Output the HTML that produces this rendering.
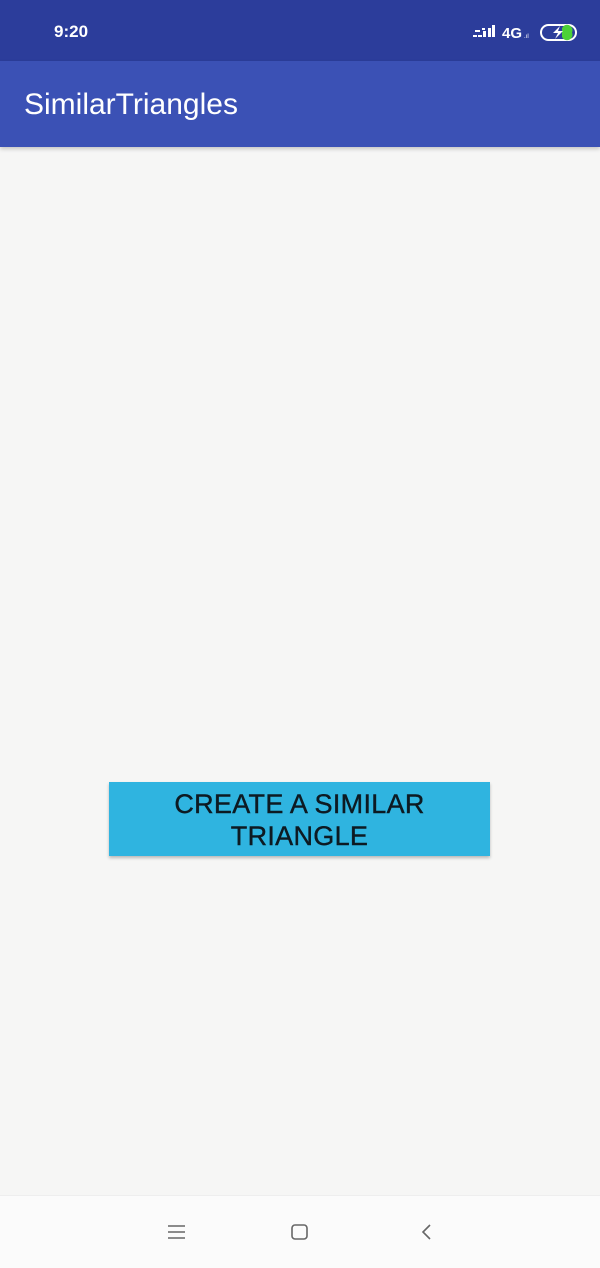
<!DOCTYPE html>
<html><head><style>
body{margin:0;width:600px;height:1267px;background:#f6f6f5;font-family:"Liberation Sans",sans-serif;position:relative;overflow:hidden}
.sb{position:absolute;top:0;left:0;width:600px;height:61px;background:#2c3d9b}
.tb{position:absolute;top:61px;left:0;width:600px;height:86px;background:#3b51b5;box-shadow:0 2px 4px rgba(0,0,0,.2)}
.btn{position:absolute;left:109px;top:782px;width:381px;height:74px;background:#2fb4e0;box-shadow:0 2px 3px rgba(0,0,0,.25);color:#0d1a22;font-size:27px;letter-spacing:0.3px;text-align:center;line-height:32px;padding-top:6px;box-sizing:border-box;-webkit-text-stroke:0.4px #0d1a22}
.nav{position:absolute;top:1195px;left:0;width:600px;height:72px;background:#fbfbfb;border-top:1px solid #eee}
</style></head><body>
<div class="sb">
<div style="position:absolute;left:54px;top:22px;color:#fff;font-size:17px;font-weight:bold">9:20</div>
<svg style="position:absolute;left:473px;top:24px" width="110" height="18">
<g fill="#fff"><rect x="0" y="11" width="4" height="2"/><rect x="5" y="11" width="4" height="2"/><rect x="10" y="7" width="3" height="6"/><rect x="15" y="4" width="3" height="9"/><rect x="19" y="1" width="3" height="12"/><rect x="2" y="6" width="5" height="2"/><rect x="9" y="4" width="3" height="2"/></g>
<text x="29" y="14" fill="#fff" font-size="15" font-weight="bold" font-family="Liberation Sans">4G</text>
<text x="51" y="14" fill="#fff" font-size="6">.ıl</text>
<rect x="68" y="1" width="35" height="15" rx="7.5" fill="none" stroke="#fff" stroke-width="2"/>
<path d="M89 4 A4.5 4.5 0 0 1 99 8.5 A4.5 4.5 0 0 1 89 13Z" fill="#4cd137"/>
<path d="M87 2 L80 9 L85 9 L82 15 L90 7 L85 7Z" fill="#fff"/>
</svg>
</div>
<div class="tb"><div style="position:absolute;left:24px;top:27px;color:#fff;font-size:30px">SimilarTriangles</div></div>
<div class="btn">CREATE A SIMILAR<br>TRIANGLE</div>
<div class="nav">
<svg style="position:absolute;left:166px;top:27px" width="280" height="20">
<g stroke="#666" stroke-width="1.6" fill="none">
<line x1="2" y1="3" x2="19" y2="3"/><line x1="2" y1="9" x2="19" y2="9"/><line x1="2" y1="15" x2="19" y2="15"/>
<rect x="126" y="2" width="15" height="14" rx="3"/>
<path d="M264 2 L257 9 L264 16"/>
</g></svg>
</div>
</body></html>
